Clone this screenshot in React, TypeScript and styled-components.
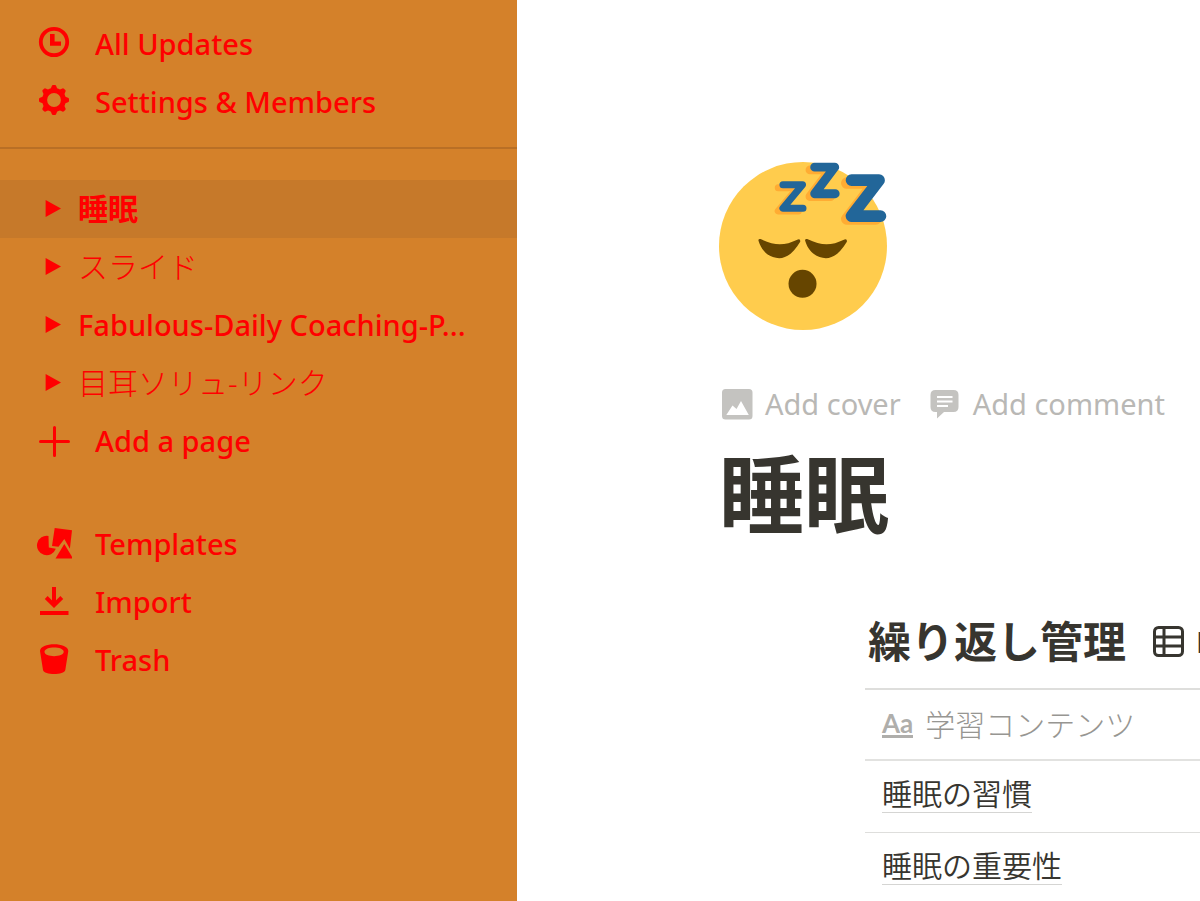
import React from 'react';
import styled, { createGlobalStyle } from 'styled-components';

const Global = createGlobalStyle`
  *, *::before, *::after { box-sizing: border-box; }
  body {
    margin: 0;
    background: #fff;
    color: #37352f;
    font-family: 'Noto Sans', 'Noto Sans CJK JP', sans-serif;
  }
  h1, h2 { margin: 0; }
  svg { display: block; }
`;

const Shell = styled.div`
  display: flex;
  height: 100vh;
  overflow: hidden;
`;

const Sidebar = styled.nav`
  flex: 0 0 517px;
  background: #d4812a;
  color: #f00;
`;

const Group = styled.div<{ $top: number; $bottom?: number }>`
  padding: ${(p) => p.$top}px 0 ${(p) => p.$bottom ?? 0}px;
`;

const Divider = styled.hr`
  margin: 0;
  border: 0;
  height: 2px;
  background: #b96f25;
`;

const Item = styled.a<{ $selected?: boolean; $tree?: boolean }>`
  display: flex;
  align-items: center;
  height: 58px;
  padding: 0 40px 0 ${(p) => (p.$tree ? 44 : 36)}px;
  gap: ${(p) => (p.$tree ? 16 : 23)}px;
  background: ${(p) => (p.$selected ? '#c6792a' : 'transparent')};
  color: inherit;
  text-decoration: none;

  svg { flex: none; fill: currentColor; }
`;

const Label = styled.span<{ $cjk?: boolean; $weight?: number }>`
  min-width: 0;
  overflow: hidden;
  white-space: nowrap;
  text-overflow: ellipsis;
  line-height: 40px;
  font-size: ${(p) => (p.$cjk ? 30 : 29)}px;
  font-weight: ${(p) => p.$weight ?? 500};
`;

const Main = styled.main`
  flex: 1;
  min-width: 0;
  overflow: hidden;
  padding: 162px 0 0 202px;
`;

const Actions = styled.div`
  display: flex;
  gap: 28px;
  margin-top: 54px;
  padding-left: 3px;
`;

const Action = styled.button`
  display: flex;
  align-items: center;
  flex: none;
  gap: 12px;
  height: 40px;
  padding: 0;
  border: 0;
  background: none;
  color: #b9b8b5;
  font: 400 29px/40px 'Noto Sans', sans-serif;
  white-space: nowrap;
`;

const Title = styled.h1`
  margin-top: 10px;
  font-size: 85px;
  line-height: 120px;
  font-weight: 700;
`;

const Database = styled.section`
  margin: 62px 0 0 146px;
`;

const DatabaseHead = styled.div`
  display: flex;
  align-items: center;
  gap: 26px;
  height: 72px;
  padding: 0 0 20px 3px;
  white-space: nowrap;
`;

const DatabaseTitle = styled.h2`
  font-size: 43px;
  line-height: 52px;
  font-weight: 700;
`;

const ViewButton = styled.button`
  display: flex;
  align-items: center;
  gap: 12px;
  padding: 0;
  border: 0;
  background: none;
  color: #37352f;
  font: 500 29px/40px 'Noto Sans', sans-serif;
`;

const Table = styled.table`
  width: 100%;
  border-collapse: collapse;
  border-top: 2px solid #dededc;
`;

const HeadCell = styled.th`
  height: 71px;
  padding: 0 0 0 17px;
  border-bottom: 2px solid #e2e2e0;
  color: #979692;
  font-size: 30px;
  font-weight: 300;
  line-height: 40px;
  text-align: left;
  white-space: nowrap;
`;

const HeadLabel = styled.span`
  display: flex;
  align-items: center;
  gap: 12px;
`;

const TextType = styled.span`
  border-bottom: 3px solid #afaeab;
  color: #afaeab;
  font: 700 26px/24px Lato, sans-serif;
`;

const Cell = styled.td`
  height: 72px;
  padding: 0 0 4px 17px;
  border-bottom: 1px solid #dededc;
  font-size: 30px;
  font-weight: 350;
  line-height: 36px;
  white-space: nowrap;
`;

const PageLink = styled.a`
  display: inline-block;
  border-bottom: 1px solid #d5d5d3;
  color: inherit;
  text-decoration: none;
`;

const ClockIcon = () => (
  <svg width="36" height="36" viewBox="0 0 36 36">
    <circle cx="18" cy="16" r="13.2" fill="none" stroke="currentColor" strokeWidth="3.8" />
    <path d="M14 8h4.600v7.600H25v4.200H14z" />
  </svg>
);

const GearIcon = () => (
  <svg width="36" height="36" viewBox="0 0 36 36">
    <circle cx="18" cy="16" r="9.4" fill="none" stroke="currentColor" strokeWidth="5" />
    {[0, 45, 90, 135, 180, 225, 270, 315].map((a) => (
      <path key={a} d="M14.200 6l1.600-4q.3-1 1.200-1h2q.9 0 1.200 1l1.600 4z" transform={`rotate(${a} 18 16)`} />
    ))}
  </svg>
);

const Caret = () => (
  <svg width="18" height="20" viewBox="0 0 18 20">
    <path d="M1.600 1l15.400 8.500L1.600 18z" />
  </svg>
);

const PlusIcon = () => (
  <svg width="36" height="36" viewBox="0 0 36 36">
    <path d="M4.500 18.500H32.500M18.500 4.500v28" fill="none" stroke="currentColor" strokeWidth="3" strokeLinecap="round" />
  </svg>
);

const TemplatesIcon = () => (
  <svg width="36" height="36" viewBox="-1 0 36 36">
    <path d="M11.500 10A9.700 9.700 0 1 0 18.800 22.800L11.800 21.600z" />
    <path d="M17.700 2l17.300 2.200-2.100 18.500L27.300 13 21.500 20.800 15 20z" />
    <path d="M27.300 18L36 32.500H18.500z" />
  </svg>
);

const ImportIcon = () => (
  <svg width="36" height="36" viewBox="0 0 36 36">
    <path d="M4 27h28.500v4H4z" />
    <path d="M18 3v18M10.200 13.500L18 21.200l7.800-7.700" fill="none" stroke="currentColor" strokeWidth="4" />
  </svg>
);

const TrashIcon = () => (
  <svg width="36" height="36" viewBox="0 0 36 36">
    <path
      fillRule="evenodd"
      d="M4 9c0-9 28.300-9 28.300 0l-3 19c-.9 5.300-21.400 5.300-22.300 0zM8.500 9.800c0 5.800 19.200 5.800 19.200 0s-19.200-5.800-19.200 0z"
    />
  </svg>
);

const CoverIcon = () => (
  <svg width="31" height="31" viewBox="0 0 31 31">
    <path
      fill="#c4c3c0"
      fillRule="evenodd"
      d="M3.500 0h23.500Q30.500 0 30.500 3.500v23.500q0 3.500-3.500 3.500H3.500Q0 30.500 0 27V3.500Q0 0 3.500 0zM4.300 26h22.500L19 12l-4.500 8-4-3.500z"
    />
  </svg>
);

const CommentIcon = () => (
  <svg width="32" height="31" viewBox="0 0 32 31">
    <path fill="#c4c3c0" d="M6.500 1h18q5 0 5 5v12q0 5-5 5H15L8 29.500v-6.500H6.500q-5 0-5-5v-12q0-5 5-5z" />
    <path stroke="#fff" strokeWidth="2" d="M8 8h15.500M8 12.500h15.500M8 17h11" />
  </svg>
);

const TableIcon = () => (
  <svg width="32" height="32" viewBox="0 0 32 32" fill="none" stroke="currentColor" strokeWidth="3">
    <rect x="2.500" y="1.500" width="28" height="28" rx="4" />
    <path d="M2.500 11h28M2.500 20h28M12 1.500v28" />
  </svg>
);

const Zs = () => (
  <>
    <path strokeWidth="1.500" d="M13.700 4.900H17.900L13.700 9.900H18" />
    <path strokeWidth="1.900" d="M20.500 1.100H24.800L20.500 6.800H24.900" />
    <path strokeWidth="2.500" d="M28.400 3.900H34.300L28.400 11.600H34.600" />
  </>
);

const SleepingFace = () => (
  <svg width="170" height="168" viewBox="0 0 36.430 36" role="img" aria-label="Sleeping face">
    <circle cx="18" cy="18" r="18" fill="#ffcc4d" />
    <g fill="#664500">
      <path d="M8.500 17q-.2-.6.400-.5c3.200 1.500 5 1.500 8 .1q.6-.2.500.5C16 19.500 14.500 20.600 12.900 20.600 11 20.600 9.200 19.300 8.500 17z" />
      <path d="M18.500 17q-.2-.6.400-.5c3.200 1.500 5 1.500 8 .1q.6-.2.500.5C26 19.500 24.500 20.600 22.900 20.600 21 20.600 19.200 19.300 18.500 17z" />
      <circle cx="17.900" cy="26.100" r="3" />
    </g>
    <g fill="none" strokeLinecap="round" strokeLinejoin="round">
      <g stroke="#ffac33" transform="translate(-1 .6)"><Zs /></g>
      <g stroke="#269"><Zs /></g>
    </g>
  </svg>
);

const pages = [
  { name: '睡眠', cjk: true, weight: 700, selected: true },
  { name: 'スライド', cjk: true, weight: 300 },
  { name: 'Fabulous-Daily Coaching-P...', cjk: false, weight: 500 },
  { name: '目耳ソリュ-リンク', cjk: true, weight: 300 },
];

const contents = ['睡眠の習慣', '睡眠の重要性'];

export default function App() {
  return (
    <>
      <Global />
      <Shell>
        <Sidebar>
          <Group $top={15} $bottom={16}>
            <Item href="#updates"><ClockIcon /><Label>All Updates</Label></Item>
            <Item href="#settings"><GearIcon /><Label>Settings &amp; Members</Label></Item>
          </Group>
          <Divider />
          <Group $top={31}>
            {pages.map((p) => (
              <Item key={p.name} href="#page" $tree $selected={p.selected}>
                <Caret />
                <Label $cjk={p.cjk} $weight={p.weight}>{p.name}</Label>
              </Item>
            ))}
            <Item href="#add"><PlusIcon /><Label>Add a page</Label></Item>
          </Group>
          <Group $top={45}>
            <Item href="#templates"><TemplatesIcon /><Label>Templates</Label></Item>
            <Item href="#import"><ImportIcon /><Label>Import</Label></Item>
            <Item href="#trash"><TrashIcon /><Label>Trash</Label></Item>
          </Group>
        </Sidebar>
        <Main>
          <SleepingFace />
          <Actions>
            <Action><CoverIcon />Add cover</Action>
            <Action><CommentIcon />Add comment</Action>
          </Actions>
          <Title>睡眠</Title>
          <Database>
            <DatabaseHead>
              <DatabaseTitle>繰り返し管理</DatabaseTitle>
              <ViewButton><TableIcon />D</ViewButton>
            </DatabaseHead>
            <Table>
              <thead>
                <tr>
                  <HeadCell scope="col">
                    <HeadLabel><TextType>Aa</TextType>学習コンテンツ</HeadLabel>
                  </HeadCell>
                </tr>
              </thead>
              <tbody>
                {contents.map((c) => (
                  <tr key={c}>
                    <Cell><PageLink href="#content">{c}</PageLink></Cell>
                  </tr>
                ))}
              </tbody>
            </Table>
          </Database>
        </Main>
      </Shell>
    </>
  );
}
